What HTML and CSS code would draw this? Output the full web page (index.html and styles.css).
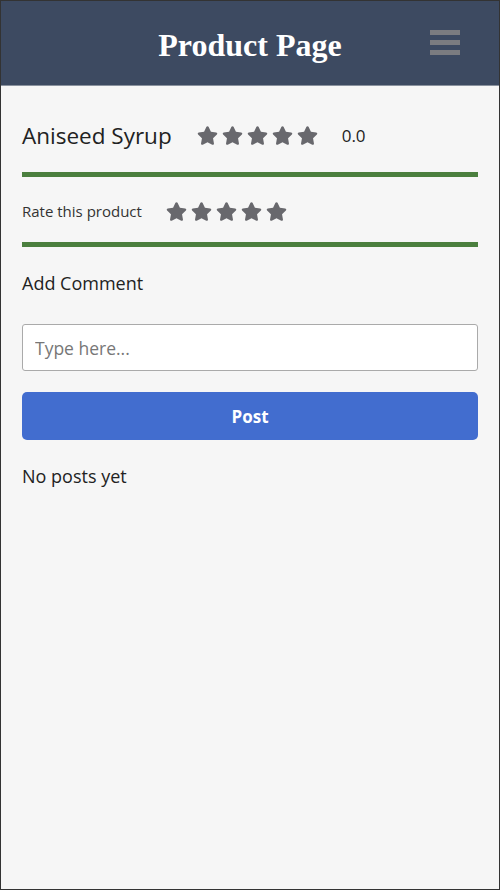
FILE: index.html
```html
<!DOCTYPE html>
<html>
<head>
<meta charset="utf-8">
<link rel="stylesheet" href="styles.css">
</head>
<body>
<div class="frame">
  <header class="header">
    <span></span>
    <h1 class="title">Product Page</h1>
    <button class="menu" aria-label="menu"><span></span><span></span><span></span></button>
  </header>
  <main class="content">
    <div class="product-row">
      <h2 class="name">Aniseed Syrup</h2>
      <div class="stars">
        <svg viewBox="0 0 576 512"><path d="M259.3 17.8L194 150.2 47.9 171.5c-26.2 3.8-36.7 36.1-17.7 54.6l105.7 103-25 145.5c-4.5 26.3 23.2 46 46.4 33.7L288 439.6l130.7 68.7c23.2 12.2 50.9-7.4 46.4-33.7l-25-145.5 105.7-103c19-18.5 8.5-50.8-17.7-54.6L382 150.2 316.7 17.8c-11.7-23.6-45.6-23.9-57.4 0z"/></svg>
        <svg viewBox="0 0 576 512"><path d="M259.3 17.8L194 150.2 47.9 171.5c-26.2 3.8-36.7 36.1-17.7 54.6l105.7 103-25 145.5c-4.5 26.3 23.2 46 46.4 33.7L288 439.6l130.7 68.7c23.2 12.2 50.9-7.4 46.4-33.7l-25-145.5 105.7-103c19-18.5 8.5-50.8-17.7-54.6L382 150.2 316.7 17.8c-11.7-23.6-45.6-23.9-57.4 0z"/></svg>
        <svg viewBox="0 0 576 512"><path d="M259.3 17.8L194 150.2 47.9 171.5c-26.2 3.8-36.7 36.1-17.7 54.6l105.7 103-25 145.5c-4.5 26.3 23.2 46 46.4 33.7L288 439.6l130.7 68.7c23.2 12.2 50.9-7.4 46.4-33.7l-25-145.5 105.7-103c19-18.5 8.5-50.8-17.7-54.6L382 150.2 316.7 17.8c-11.7-23.6-45.6-23.9-57.4 0z"/></svg>
        <svg viewBox="0 0 576 512"><path d="M259.3 17.8L194 150.2 47.9 171.5c-26.2 3.8-36.7 36.1-17.7 54.6l105.7 103-25 145.5c-4.5 26.3 23.2 46 46.4 33.7L288 439.6l130.7 68.7c23.2 12.2 50.9-7.4 46.4-33.7l-25-145.5 105.7-103c19-18.5 8.5-50.8-17.7-54.6L382 150.2 316.7 17.8c-11.7-23.6-45.6-23.9-57.4 0z"/></svg>
        <svg viewBox="0 0 576 512"><path d="M259.3 17.8L194 150.2 47.9 171.5c-26.2 3.8-36.7 36.1-17.7 54.6l105.7 103-25 145.5c-4.5 26.3 23.2 46 46.4 33.7L288 439.6l130.7 68.7c23.2 12.2 50.9-7.4 46.4-33.7l-25-145.5 105.7-103c19-18.5 8.5-50.8-17.7-54.6L382 150.2 316.7 17.8c-11.7-23.6-45.6-23.9-57.4 0z"/></svg>
      </div>
      <span class="score">0.0</span>
    </div>
    <hr class="divider">
    <div class="rate-row">
      <span class="rate-label">Rate this product</span>
      <div class="stars">
        <svg viewBox="0 0 576 512"><path d="M259.3 17.8L194 150.2 47.9 171.5c-26.2 3.8-36.7 36.1-17.7 54.6l105.7 103-25 145.5c-4.5 26.3 23.2 46 46.4 33.7L288 439.6l130.7 68.7c23.2 12.2 50.9-7.4 46.4-33.7l-25-145.5 105.7-103c19-18.5 8.5-50.8-17.7-54.6L382 150.2 316.7 17.8c-11.7-23.6-45.6-23.9-57.4 0z"/></svg>
        <svg viewBox="0 0 576 512"><path d="M259.3 17.8L194 150.2 47.9 171.5c-26.2 3.8-36.7 36.1-17.7 54.6l105.7 103-25 145.5c-4.5 26.3 23.2 46 46.4 33.7L288 439.6l130.7 68.7c23.2 12.2 50.9-7.4 46.4-33.7l-25-145.5 105.7-103c19-18.5 8.5-50.8-17.7-54.6L382 150.2 316.7 17.8c-11.7-23.6-45.6-23.9-57.4 0z"/></svg>
        <svg viewBox="0 0 576 512"><path d="M259.3 17.8L194 150.2 47.9 171.5c-26.2 3.8-36.7 36.1-17.7 54.6l105.7 103-25 145.5c-4.5 26.3 23.2 46 46.4 33.7L288 439.6l130.7 68.7c23.2 12.2 50.9-7.4 46.4-33.7l-25-145.5 105.7-103c19-18.5 8.5-50.8-17.7-54.6L382 150.2 316.7 17.8c-11.7-23.6-45.6-23.9-57.4 0z"/></svg>
        <svg viewBox="0 0 576 512"><path d="M259.3 17.8L194 150.2 47.9 171.5c-26.2 3.8-36.7 36.1-17.7 54.6l105.7 103-25 145.5c-4.5 26.3 23.2 46 46.4 33.7L288 439.6l130.7 68.7c23.2 12.2 50.9-7.4 46.4-33.7l-25-145.5 105.7-103c19-18.5 8.5-50.8-17.7-54.6L382 150.2 316.7 17.8c-11.7-23.6-45.6-23.9-57.4 0z"/></svg>
        <svg viewBox="0 0 576 512"><path d="M259.3 17.8L194 150.2 47.9 171.5c-26.2 3.8-36.7 36.1-17.7 54.6l105.7 103-25 145.5c-4.5 26.3 23.2 46 46.4 33.7L288 439.6l130.7 68.7c23.2 12.2 50.9-7.4 46.4-33.7l-25-145.5 105.7-103c19-18.5 8.5-50.8-17.7-54.6L382 150.2 316.7 17.8c-11.7-23.6-45.6-23.9-57.4 0z"/></svg>
      </div>
    </div>
    <hr class="divider">
    <label class="comment-label" for="comment">Add Comment</label>
    <input id="comment" class="comment-input" type="text" placeholder="Type here...">
    <button class="post-btn">Post</button>
    <p class="empty">No posts yet</p>
  </main>
</div>
</body>
</html>
```
FILE: styles.css
```css
* { box-sizing: border-box; }
html, body { margin: 0; padding: 0; }
body {
  font-family: "Open Sans", "Noto Sans", sans-serif;
  color: #222;
}
.frame {
  width: 500px;
  height: 890px;
  border: 1px solid #333;
  background: #f6f6f6;
  overflow: hidden;
}
.header {
  height: 85px;
  background: #3d4a61;
  border-bottom: 1px solid #8a929e;
  display: grid;
  grid-template-columns: 1fr auto 1fr;
  align-items: center;
}
.title {
  margin: 0;
  font-family: "Liberation Serif", serif;
  font-weight: bold;
  font-size: 32px;
  color: #fff;
  line-height: 1;
  padding-top: 4px;
}
.menu {
  justify-self: end;
  margin-right: 39px;
  margin-top: -2px;
  width: 30px;
  padding: 0;
  border: none;
  background: transparent;
  display: flex;
  flex-direction: column;
  gap: 5px;
}
.menu span {
  display: block;
  height: 5px;
  background: #7b7c80;
}
.content {
  padding: 0 21px;
}
.product-row {
  display: flex;
  align-items: center;
  height: 30px;
  margin-top: 34px;
  margin-bottom: 22px;
}
.name {
  margin: 0;
  font-weight: normal;
  font-size: 22.5px;
  color: #222;
  margin-right: 25px;
}
.stars {
  display: flex;
  gap: 4px;
}
.stars svg {
  width: 21px;
  height: 19px;
  fill: #68686d;
}
.score {
  margin-left: 24px;
  font-size: 17px;
  color: #222;
}
.divider {
  margin: 0;
  border: none;
  height: 5px;
  background: #4b7f3e;
}
.rate-row {
  display: flex;
  align-items: center;
  height: 30px;
  margin-top: 19px;
  margin-bottom: 16px;
}
.rate-label {
  font-size: 15px;
  color: #333;
  margin-right: 24px;
}
.comment-label {
  display: block;
  margin-top: 24px;
  font-size: 18px;
  line-height: 24px;
  color: #222;
}
.comment-input {
  display: block;
  width: 100%;
  height: 47px;
  margin-top: 29px;
  border: 1px solid #aaa;
  border-radius: 3px;
  background: #fff;
  padding: 0 12px;
  font-family: inherit;
  font-size: 17.5px;
  color: #222;
}
.comment-input::placeholder { color: #777; }
.post-btn {
  display: block;
  width: 100%;
  height: 48px;
  margin-top: 21px;
  border: none;
  border-radius: 5px;
  background: #426dcf;
  color: #fff;
  font-family: inherit;
  font-weight: bold;
  font-size: 17px;
}
.empty {
  margin: 24px 0 0;
  font-size: 18px;
  line-height: 24px;
  color: #222;
}
```
